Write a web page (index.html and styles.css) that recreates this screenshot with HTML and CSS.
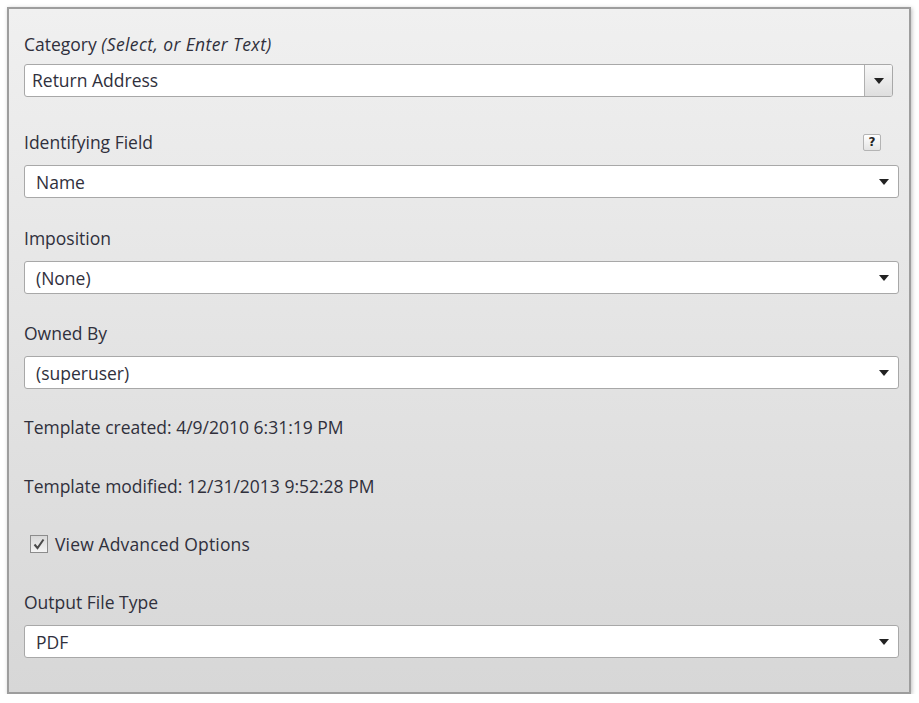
FILE: index.html
```html
<!DOCTYPE html>
<html>
<head>
<meta charset="utf-8">
<link rel="stylesheet" href="styles.css">
</head>
<body>
<div class="panel">
  <div class="field f-category">
    <div class="label">Category <i>(Select, or Enter Text)</i></div>
    <div class="combo">
      <div class="combo-text">Return Address</div>
      <div class="combo-btn"><span class="arrow"></span></div>
    </div>
  </div>

  <div class="field f-ident">
    <div class="label label-row">
      <span>Identifying Field</span>
      <span class="help">?</span>
    </div>
    <div class="select"><span class="val">Name</span><span class="arrow"></span></div>
  </div>

  <div class="field f-impo">
    <div class="label">Imposition</div>
    <div class="select"><span class="val">(None)</span><span class="arrow"></span></div>
  </div>

  <div class="field f-owner">
    <div class="label">Owned By</div>
    <div class="select"><span class="val">(superuser)</span><span class="arrow"></span></div>
  </div>

  <div class="info">Template created: 4/9/2010 6:31:19 PM</div>
  <div class="info">Template modified: 12/31/2013 9:52:28 PM</div>

  <label class="check">
    <span class="box"><svg width="14" height="14" viewBox="0 0 14 14"><path d="M2.5 7.5 L5.5 11 L11.5 2.5" fill="none" stroke="#4a4a4a" stroke-width="2"/></svg></span>
    <span class="check-text">View Advanced Options</span>
  </label>

  <div class="field f-output">
    <div class="label">Output File Type</div>
    <div class="select"><span class="val">PDF</span><span class="arrow"></span></div>
  </div>
</div>
</body>
</html>
```

FILE: styles.css
```css
html, body {
  margin: 0;
  padding: 0;
  background: #ffffff;
}
body {
  font-family: "Open Sans", "Noto Sans", sans-serif;
  font-size: 17.5px;
  color: #30303c;
}
.panel {
  margin: 7px 0 0 7px;
  width: 904px;
  height: 687px;
  box-sizing: border-box;
  border: 2px solid #9d9d9d;
  background: linear-gradient(#f0f0f0, #d7d7d7);
  box-shadow: 1px 1px 4px rgba(0, 0, 0, 0.25);
  padding: 24px 10px 0 15px;
  display: flex;
  flex-direction: column;
}
.field {
  display: flex;
  flex-direction: column;
  gap: 12px;
}
.f-category {
  gap: 9px;
  margin-bottom: 34px;
}
.f-ident {
  margin-bottom: 29px;
}
.f-impo {
  margin-bottom: 28px;
}
.f-owner {
  margin-bottom: 27px;
}
.label {
  height: 22px;
  line-height: 22px;
}
.label i {
  font-style: italic;
  letter-spacing: 0.4px;
}
.label-row {
  display: flex;
  justify-content: space-between;
  align-items: center;
}
.help {
  width: 18px;
  height: 17px;
  box-sizing: border-box;
  border: 1px solid #b4b4b4;
  border-radius: 2px;
  background: linear-gradient(#ffffff, #e4e4e4);
  font-family: "DejaVu Sans", sans-serif;
  font-weight: bold;
  font-size: 12px;
  line-height: 15px;
  text-align: center;
  color: #222;
  margin-right: 18px;
}
.combo {
  display: flex;
  width: 869px;
  height: 33px;
  box-sizing: border-box;
  border: 1px solid #a8a8a8;
  border-radius: 3px;
  background: #fff;
  overflow: hidden;
}
.combo-text {
  flex: 1;
  padding-left: 7px;
  line-height: 31px;
}
.combo-btn {
  width: 27px;
  border-left: 1px solid #b0b0b0;
  background: linear-gradient(#f7f7f7, #dedede);
  display: flex;
  align-items: center;
  justify-content: center;
}
.select {
  display: flex;
  align-items: center;
  justify-content: space-between;
  height: 33px;
  box-sizing: border-box;
  border: 1px solid #a8a8a8;
  border-radius: 3px;
  background: #fff;
  padding: 0 9px 0 11px;
}
.arrow {
  width: 0;
  height: 0;
  border-left: 5px solid transparent;
  border-right: 5px solid transparent;
  border-top: 6px solid #222;
}
.info {
  height: 22px;
  line-height: 22px;
  margin-bottom: 37px;
}
.info + .info {
  margin-bottom: 36px;
}
.check {
  display: flex;
  align-items: center;
  gap: 7px;
  height: 22px;
  margin-left: 6px;
  margin-bottom: 36px;
}
.check-text {
  letter-spacing: 0.15px;
}
.box {
  width: 18px;
  height: 18px;
  box-sizing: border-box;
  border: 1px solid #8c8c8c;
  background: linear-gradient(#d8d8d8, #f4f4f4);
  display: flex;
  align-items: center;
  justify-content: center;
}
```
